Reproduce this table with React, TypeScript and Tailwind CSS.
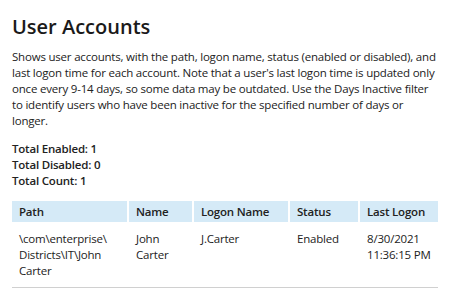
export default function App() {
  const cols = "grid grid-cols-[115px_63px_94px_68px_78px] gap-x-[2px]";
  return (
    <div className="w-[450px] h-[300px] bg-white px-3 pt-[13px] text-[#222] overflow-hidden" style={{ fontFamily: '"Open Sans", sans-serif' }}>
      <h1 className="text-[20px] leading-[28px] font-semibold text-[#1a1a1a]">User Accounts</h1>
      <div className="tracking-[-0.2px] text-[11.5px] leading-[16px]">
        <p className="mt-2">
          Shows user accounts, with the path, logon name, status (enabled or disabled), and last logon time for each account. Note that a user's last logon time is updated only once every 9-14 days, so some data may be outdated. Use the Days Inactive filter to identify users who have been inactive for the specified number of days or longer.
        </p>
        <div className="mt-3 font-semibold">
          <div>Total Enabled: 1</div>
          <div>Total Disabled: 0</div>
          <div>Total Count: 1</div>
        </div>
        <div className="mt-3 w-[426px]">
          <div className={cols + " font-semibold"}>
            {["Path", "Name", "Logon Name", "Status", "Last Logon"].map((h) => (
              <div key={h} className="bg-[#d5eaf7] h-[21px] flex items-center pl-[7px] pr-1 whitespace-nowrap">{h}</div>
            ))}
          </div>
          <div className="border-b border-[#d0d0d0]">
            <div className={cols + " pt-[9px] pb-2"}>
              <div className="pl-[7px] pr-1">\com\enterprise\ Districts\IT\John Carter</div>
              <div className="pl-[7px] pr-1">John Carter</div>
              <div className="pl-[7px] pr-1">J.Carter</div>
              <div className="pl-[7px] pr-1">Enabled</div>
              <div className="pl-[7px] pr-1">8/30/2021 11:36:15 PM</div>
            </div>
          </div>
        </div>
      </div>
    </div>
  );
}
